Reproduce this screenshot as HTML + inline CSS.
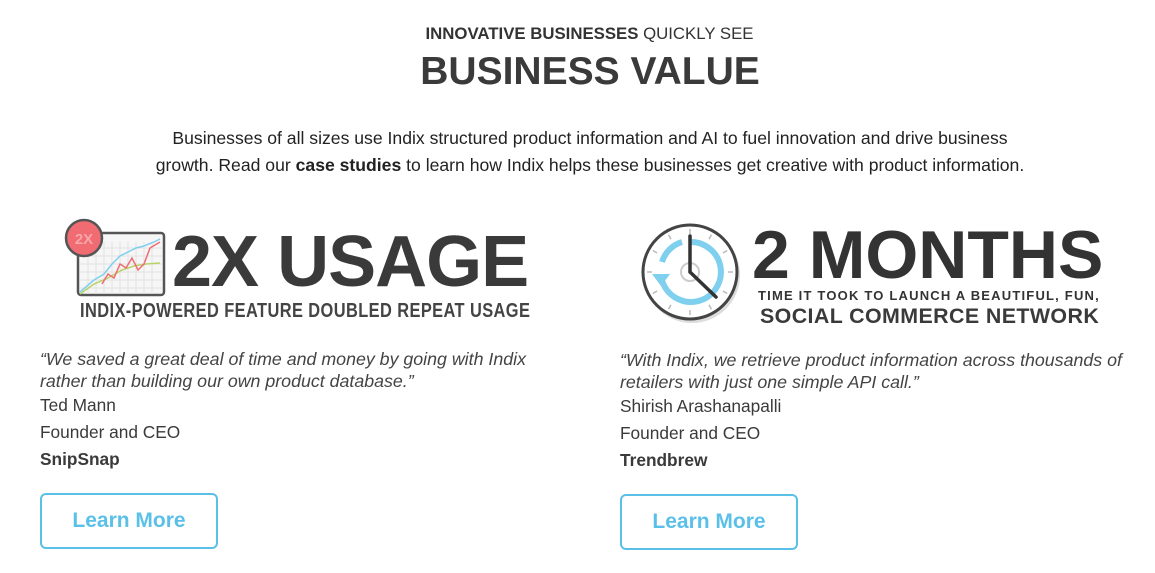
<!DOCTYPE html>
<html><head><meta charset="utf-8"><style>
body{margin:0;width:1155px;height:573px;background:#fff;font-family:"Liberation Sans",sans-serif;color:#3a3a3a;position:relative;overflow:hidden}
.a{position:absolute;white-space:nowrap}
.c{left:0;width:1155px;text-align:center;box-sizing:border-box}
.q{font-style:italic;font-size:17.8px;line-height:22px;color:#444}
.n{font-size:17.3px;color:#3a3a3a}
.btn{position:absolute;width:174px;height:52px;border:2px solid #5bc0e8;border-radius:6px;color:#5bc0e8;font-weight:bold;font-size:21px;text-align:center;line-height:52px}
</style></head><body>
<div class="a c" style="top:24px;font-size:16.8px;color:#333;padding-left:24px"><b>INNOVATIVE BUSINESSES</b> QUICKLY SEE</div>
<div class="a c" style="top:50px;font-size:39px;font-weight:bold;color:#3a3a3a;padding-left:25px">BUSINESS VALUE</div>
<div class="a c" style="top:125px;font-size:17.6px;line-height:27px;color:#222;padding-left:25px">Businesses of all sizes use Indix structured product information and AI to fuel innovation and drive business<br>growth. Read our <b>case studies</b> to learn how Indix helps these businesses get creative with product information.</div>

<svg class="a" style="left:62px;top:218px" width="105" height="80" viewBox="0 0 105 80">
<rect x="16" y="15" width="86" height="62" rx="3" fill="#f6f6f6" stroke="#555" stroke-width="2.5"/>
<g stroke="#e2e2e2" stroke-width="1">
<path d="M18 30H100M18 38H100M18 46H100M18 54H100M18 62H100M18 70H100M26 24V76M34 24V76M42 24V76M50 24V76M58 24V76M66 24V76M74 24V76M82 24V76M90 24V76"/></g>
<path d="M18 74L32 62L42 56L50 46L58 38L66 34L74 30L82 28L92 24L98 21" fill="none" stroke="#7fcfee" stroke-width="1.5"/>
<path d="M18 76L32 66L46 60L60 52L72 48L84 46L98 45" fill="none" stroke="#b9d36a" stroke-width="1.5"/>
<path d="M40 66L46 56L52 60L58 46L64 50L70 40L76 52L82 46L88 30L98 24" fill="none" stroke="#f06b72" stroke-width="1.5"/>
<circle cx="22" cy="20" r="18" fill="#f06b72" stroke="#555" stroke-width="2.5"/>
<text x="22" y="26" text-anchor="middle" font-size="15" font-weight="bold" fill="#f7a6aa" font-family="Liberation Sans">2X</text>
</svg>
<div class="a" style="left:172px;top:221px;font-size:72px;font-weight:bold;color:#3a3a3a;letter-spacing:-1px">2X USAGE</div>
<div class="a" style="left:80px;top:300px;font-size:20px;font-weight:bold;color:#444;transform:scaleX(0.82);transform-origin:left;letter-spacing:0.5px">INDIX-POWERED FEATURE DOUBLED REPEAT USAGE</div>

<svg class="a" style="left:640px;top:222px" width="105" height="105" viewBox="0 0 105 105">
<circle cx="52" cy="53" r="48" fill="#ddd"/>
<circle cx="50" cy="50" r="47" fill="#fff" stroke="#444" stroke-width="3"/>
<g stroke="#bbb" stroke-width="1.5"><path d="M50 7V12M50 88V93M7 50H12M88 50H93M71.5 12.8L69 17.1M28.5 12.8L31 17.1M71.5 87.2L69 82.9M28.5 87.2L31 82.9M12.8 28.5L17.1 31M87.2 28.5L82.9 31M12.8 71.5L17.1 69M87.2 71.5L82.9 69"/></g>
<path d="M50 20A30 30 0 1 1 22 58" fill="none" stroke="#7fcfee" stroke-width="6"/>
<path d="M42 20A30 30 0 0 0 22 40" fill="none" stroke="#7fcfee" stroke-width="6"/>
<path d="M12 52L21 64L30 52Z" fill="#7fcfee"/>
<circle cx="50" cy="50" r="9" fill="none" stroke="#ccc" stroke-width="2"/>
<path d="M50 50V14M50 50L76 75" stroke="#333" stroke-width="3.5" stroke-linecap="round"/>
</svg>
<div class="a" style="left:752px;top:216px;font-size:68px;font-weight:bold;color:#333">2 MONTHS</div>
<div class="a" style="left:758px;top:288px;font-size:13px;font-weight:bold;color:#333;letter-spacing:1.2px">TIME IT TOOK TO LAUNCH A BEAUTIFUL, FUN,</div>
<div class="a" style="left:760px;top:304px;font-size:21.4px;font-weight:bold;color:#3a3a3a;letter-spacing:0.4px">SOCIAL COMMERCE NETWORK</div>

<div class="a q" style="left:40px;top:348px">“We saved a great deal of time and money by going with Indix<br>rather than building our own product database.”</div>
<div class="a n" style="left:40px;top:395px">Ted Mann</div>
<div class="a n" style="left:40px;top:422px">Founder and CEO</div>
<div class="a n" style="left:40px;top:449px;font-weight:bold">SnipSnap</div>
<div class="btn" style="left:40px;top:493px">Learn More</div>

<div class="a q" style="left:620px;top:349px">“With Indix, we retrieve product information across thousands of<br>retailers with just one simple API call.”</div>
<div class="a n" style="left:620px;top:396px">Shirish Arashanapalli</div>
<div class="a n" style="left:620px;top:423px">Founder and CEO</div>
<div class="a n" style="left:620px;top:450px;font-weight:bold">Trendbrew</div>
<div class="btn" style="left:620px;top:494px">Learn More</div>
</body></html>
